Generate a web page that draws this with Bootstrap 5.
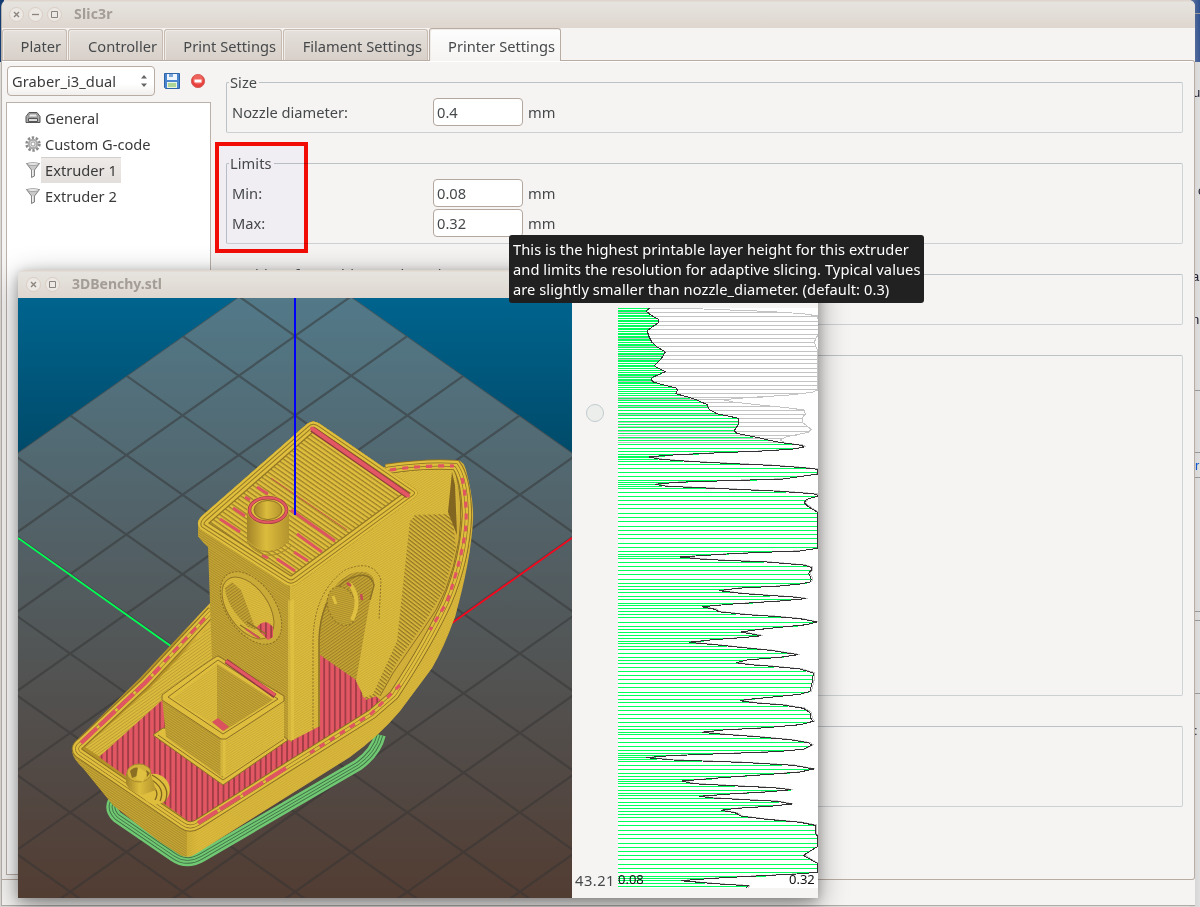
<!DOCTYPE html>
<html lang="en">
<head>
<meta charset="utf-8">
<title>Slic3r</title>
<link href="https://cdn.jsdelivr.net/npm/bootstrap@5.3.0/dist/css/bootstrap.min.css" rel="stylesheet">
<style>
body{width:1200px;height:907px;overflow:hidden;background:#dcdcdc;color:#46494b;font:14.667px/20px "Noto Sans","Open Sans",sans-serif}
.desk-l{left:0;top:0;width:4px;height:907px;background:linear-gradient(#123c72 0 62px,#dcd9d5 62px)}
.desk-r{right:0;top:0;width:10px;height:907px;background:linear-gradient(90deg,#bbb6,#ddd0),linear-gradient(#2b4f8e,#3d5a94 62px,#dedede 62px)}
.desk-r span{position:absolute;font:13px/16px "Liberation Sans",sans-serif;color:#223}
.desk-r hr{position:absolute;right:0;width:6px;margin:0;border-top:1px solid #999;opacity:1}
.win{border-radius:7px 7px 0 0}
.main-win{left:1px;top:0;width:1194px;height:906px;background:#f5f4f2;border-left:1px solid #b5b0ab;border-bottom:1px solid #b0aca8}
.titlebar{height:28px;background:linear-gradient(#dfd5cd 0 1px,#e6e4df 2px,#ded6cf);border-radius:6px 6px 0 0;color:#a49c96;font-weight:700;font-size:14px}
.wbtn{width:15px;height:15px;border-radius:50%;background:#ece8e3;border:1px solid #dacdc4;margin-right:4px;display:block;flex:none}
.wbtn svg{display:block}
.tabs{height:32px}
.tab-i{height:31px;border:1px solid #c8bbb1;border-bottom:0;border-radius:3px 3px 0 0;background:linear-gradient(#e5e0db,#d8d0c9);text-align:right;padding:6px 5px 0 0;margin-right:1px;box-shadow:inset 1px 1px 0 #efebe7;white-space:nowrap}
.tab-i.on{height:33px;background:linear-gradient(#fdfdfd,#f5f4f2);position:relative;z-index:1;margin-bottom:-1px;border-color:#b9aca2;padding-top:7px}
.pane{height:820px;border:1px solid #b9aca2;border-left:0;border-radius:0 3px 3px 0;box-shadow:inset 0 1px #fff}
.side{width:209px;padding:5px 0 0 4px}
.combo{width:148px;height:30px;border:1px solid #b9aca2;border-radius:4px;background:linear-gradient(#fff 60%,#f1efed);padding:0 6px 0 4px;margin-left:1px;color:#3a3a3a;letter-spacing:.07px}
.tree{height:773px;margin-top:6px;border:1px solid #bbb1a9;background:#fff;padding:2px 0 0 18px;color:#3a3a3a}
.tree>div{height:26px}
.tree span{height:26px;padding:2px 4px 0 3px;border:1px solid transparent}
.tree .sel{background:linear-gradient(#eeebe8,#e2dedb);border:1px solid #d4ceca;border-width:1px 0 0 0;padding:2px 4px 0 4px}
.form-side{padding:21px 0 0 15px}
.fs{position:relative;width:957px;border:1px solid #bac2c6;border-right-color:#ccd4d6;border-bottom-color:#cbd0d3;border-radius:2px;margin-bottom:30px;padding:15px 0 0 5px}
.fs>b{position:absolute;font-weight:400;left:2px;top:-11px;background:#f5f4f2;padding:0 2px 0 1px;letter-spacing:.05px}
.frow{height:28px;margin-bottom:2px}
.frow label{width:201px}
.inp{width:90px;height:28px;border:1px solid #b3a79e;border-radius:4px;background:#fff;padding:0 3px;color:#46494b;margin-right:5px;font:inherit}
.redbox{left:215px;top:142px;width:93px;height:111px;border:4px solid #fb0d05;background:#faf9ff;mix-blend-mode:multiply}
.dlg{left:18px;top:270px;width:800px;height:628px;background:#f5f4f2;box-shadow:0 8px 30px rgba(0,0,0,.38),0 3px 12px rgba(0,0,0,.25)}
.tip{left:509px;top:235px;width:415px;height:68px;border-radius:3px;background:#1d1d1dfb;color:#fff;padding:3.500px 4px;white-space:nowrap;letter-spacing:.055px}
.zcol{width:46px}
.knob{width:18px;height:18px;border:1.5px solid #c2cbcd;border-radius:50%;background:#eceeec;left:14px;top:106px}
.zval{left:3px;bottom:8px;letter-spacing:.5px}
</style>
</head>
<body class="position-relative">
<div class="desk-l position-absolute"></div>
<div class="desk-r position-absolute overflow-hidden">
<hr style="top:13px"><span style="left:3px;top:85px">us</span><span style="left:8px;top:183px">o</span><span style="left:2px;top:269px">an</span><span style="left:2px;top:312px">ni</span><span style="left:5px;top:458px;color:#15c">r</span><span style="left:4px;top:723px">:</span>
<hr style="top:390px"><hr style="top:452px"><hr style="top:477px"><hr style="top:611px"><hr style="top:620px"><hr style="top:693px">
</div>

<div class="win main-win position-absolute">
<div class="titlebar d-flex align-items-center" style="padding-left:7px">
<i class="wbtn"><svg width="13" height="13" stroke="#8c857f" stroke-width="1.4"><path d="M4 4l5 5M9 4l-5 5"/></svg></i>
<i class="wbtn"><svg width="13" height="13" stroke="#8c857f" stroke-width="1.3"><path d="M3 6.5h7"/></svg></i>
<i class="wbtn"><svg width="13" height="13" stroke="#8c857f" fill="none"><path d="M3.5 3.5h6v6h-6z"/></svg></i>
<span style="margin-left:8px;letter-spacing:.2px">Slic3r</span></div>
<div class="tabs d-flex align-items-end">
<div class="tab-i" style="width:65px">Plater</div><div class="tab-i" style="width:95px">Controller</div><div class="tab-i" style="width:118px">Print Settings</div><div class="tab-i" style="width:145px">Filament Settings</div><div class="tab-i on" style="width:132px">Printer Settings</div>
</div>
<div class="pane d-flex">
<div class="side">
<div class="d-flex align-items-center">
<div class="combo d-flex align-items-center justify-content-between"><span>Graber_i3_dual</span><svg width="8" height="14"><path d="M1 4.5l3-3.5 3 3.5zM1 9.5l3 3.5 3-3.500z" fill="#666"/></svg></div>
<svg width="16" height="16" style="margin-left:9px"><path d="M.5 .5h15v15h-14l-1-1z" fill="#4a86cf" stroke="#2c63a8"/><path d="M3 1h10v6H3z" fill="#eef5fc"/><path d="M5 1h4v3H5z" fill="#7aa5d8"/><path d="M3 9h10v6H3z" fill="#e9f3e0"/><path d="M4 11h8M4 13h8" stroke="#72b84c"/></svg>
<svg width="16" height="16" style="margin-left:10px"><circle cx="8" cy="8" r="6.6" fill="#e8403c" stroke="#d2625c"/><circle cx="8" cy="6.5" r="5" fill="#f47c72" opacity=".6"/><path d="M4.500 6.500h7v3h-7z" fill="#fff"/></svg>
</div>
<div class="tree">
<div class="d-flex align-items-center"><svg width="16" height="16"><path d="M4 2.5h8l3 4v6H1v-6z" fill="#aaa" stroke="#555"/><path d="M4.5 4h7l1 3h-9z" fill="#eee" stroke="#777" stroke-width=".7"/><path d="M3.5 8.5h9v3h-9z" fill="#ddd" stroke="#555"/></svg><span>General</span></div>
<div class="d-flex align-items-center"><svg width="16" height="16"><circle cx="8" cy="8" r="6.4" fill="none" stroke="#8b8b8b" stroke-width="2.6" stroke-dasharray="2.4 1.62"/><circle cx="8" cy="8" r="4.2" fill="#ddd" stroke="#aaa" stroke-width="2"/><circle cx="8" cy="8" r="2" fill="#fff" stroke="#888" stroke-width=".8"/></svg><span>Custom G-code</span></div>
<div class="d-flex align-items-center"><svg width="16" height="16"><path d="M1.5 1.5h13l-5 6.5v6l-3 1.5V8z" fill="#c9c9c9" stroke="#777" stroke-width=".9"/><ellipse cx="8" cy="2" rx="6" ry="1.4" fill="#eee" stroke="#888" stroke-width=".7"/><path d="M7.8 8v6" stroke="#fff"/></svg><span class="sel">Extruder 1</span></div>
<div class="d-flex align-items-center"><svg width="16" height="16"><path d="M1.5 1.5h13l-5 6.5v6l-3 1.5V8z" fill="#c9c9c9" stroke="#777" stroke-width=".9"/><ellipse cx="8" cy="2" rx="6" ry="1.4" fill="#eee" stroke="#888" stroke-width=".7"/><path d="M7.8 8v6" stroke="#fff"/></svg><span>Extruder 2</span></div>
</div>
</div>
<div class="form-side">
<div class="fs" style="height:51px"><b>Size</b><div class="frow d-flex align-items-center"><label>Nozzle diameter:</label><input class="inp" value="0.4">mm</div></div>
<div class="fs" style="height:81px"><b>Limits</b><div class="frow d-flex align-items-center"><label>Min:</label><input class="inp" value="0.08">mm</div><div class="frow d-flex align-items-center"><label>Max:</label><input class="inp" value="0.32">mm</div></div>
<div class="fs" style="height:51px"><b>Position (for multi-extruder printers)</b></div>
<div class="fs" style="height:341px"></div>
<div class="fs" style="height:81px"></div>
</div>
</div>
</div>
<div class="redbox position-absolute"></div>

<div class="win dlg position-absolute">
<div class="titlebar d-flex align-items-center" style="padding-left:8px">
<i class="wbtn"><svg width="13" height="13" stroke="#8c857f" stroke-width="1.4"><path d="M4 4l5 5M9 4l-5 5"/></svg></i>
<i class="wbtn"><svg width="13" height="13" stroke="#8c857f" fill="none"><path d="M3.5 3.5h6v6h-6z"/></svg></i>
<span style="margin-left:8px">3DBenchy.stl</span></div>
<div class="d-flex">
<svg id="view" width="554" height="600" viewBox="18 298 554 600">
<defs>
<linearGradient id="sky" x2="0" y2="1"><stop stop-color="#00648e"/><stop offset="1" stop-color="#000"/></linearGradient>
<linearGradient id="chim"><stop stop-color="#a38428"/><stop offset=".45" stop-color="#dcbc3c"/><stop offset="1" stop-color="#b4942e"/></linearGradient>
<linearGradient id="hullg" gradientUnits="userSpaceOnUse" x1="180" y1="0" x2="240" y2="0"><stop stop-color="#b39127"/><stop offset=".3" stop-color="#dab73a"/><stop offset="1" stop-color="#d2af38"/></linearGradient>
<pattern id="pL" width="3" height="2" patternUnits="userSpaceOnUse" patternTransform="rotate(33)"><rect width="3" height="2" fill="#c8a936"/><rect width="3" height=".9" fill="#a88a2a"/></pattern>
<pattern id="pR" width="3" height="2" patternUnits="userSpaceOnUse" patternTransform="rotate(-32)"><rect width="3" height="2" fill="#dfbf3e"/><rect width="3" height=".8" fill="#c8a735"/></pattern>
<pattern id="pD" width="3" height="2.6" patternUnits="userSpaceOnUse" patternTransform="rotate(-35)"><rect width="3" height="2.6" fill="#c6a634"/><rect width="3" height="1.1" fill="#9d8028"/></pattern>
<pattern id="pW" width="3" height="2.6" patternUnits="userSpaceOnUse" patternTransform="rotate(-35)"><rect width="3" height="2.6" fill="#dcbc3d"/><rect width="3" height=".9" fill="#bd9e33"/></pattern>
<pattern id="pRoof" width="4" height="3.9" patternUnits="userSpaceOnUse" patternTransform="rotate(34.8)"><rect width="4" height="4" fill="#dfbf3d"/><rect width="4" height="1.3" fill="#9a7d28"/></pattern>
<pattern id="pS" width="3" height="3.2" patternUnits="userSpaceOnUse" patternTransform="rotate(38)"><rect width="3" height="3.2" fill="#d4b43a"/><rect width="3" height="1.2" fill="#917526"/></pattern>
<pattern id="pDeck" width="5.3" height="4" patternUnits="userSpaceOnUse"><rect width="5.3" height="4" fill="#e25763"/><rect width="1.8" height="4" fill="#a03c45"/></pattern>
<clipPath id="cBed"><path d="M295 257L-150 571V898H740V571z"/></clipPath>
<clipPath id="cRoof"><path id="roofp" d="M307 424Q313 419 320 424L415 489Q420 493 415 497L297 584Q291 588 285 584L200 529Q195 523 202 516z"/></clipPath>
</defs>
<path d="M18 298h554v600H18z" fill="url(#sky)"/>
<path d="M295 257L-150 571V898H740V571z" fill="#cc997f" fill-opacity=".4"/>
<g id="grid" clip-path="url(#cBed)" stroke="#333" stroke-opacity=".5" stroke-width="2.2"></g>
<path d="M18 538L175 649" stroke="#0f5" stroke-width="1.8"/><path d="M572 538L452 623" stroke="#f8081e" stroke-width="1.8"/>
<!-- skirt loops -->
<g fill="none" stroke-linejoin="round">
<path d="M117 797Q107 807 117 817L174 856Q187 865 202 856L358 765Q376 752 380 735" stroke="#70c873" stroke-width="11.5"/>
<path d="M117 797Q107 807 117 817L174 856Q187 865 202 856L358 765Q376 752 380 735" stroke="#3f6e43" stroke-width="6.4"/>
<path d="M117 797Q107 807 117 817L174 856Q187 865 202 856L358 765Q376 752 380 735" stroke="#70c873" stroke-width="4.6"/>
<path d="M117 797Q107 807 117 817L174 856Q187 865 202 856L358 765Q376 752 380 735" stroke="#3f6e43" stroke-width=".9"/>
</g>
<!-- hull -->
<path d="M72 747L77 740 140 678 211 602 380 468 413 462 433 461 458 460Q464 462 466 470 474 500 473 520 471 560 455 617 443 650 432 668L400 711Q380 735 350 757L197 853Q188 859 180 855L160 842 113 805 83 768Q71 757 72 747z" fill="url(#hullg)"/>
<path d="M72 748L187 828 186 857 160 842 113 805 83 768Q71 757 72 748z" fill="url(#pL)"/>
<path d="M187 828V857Q190 858 197 853L350 757Q380 735 400 711L432 668 455 617 470 550 462 560 430 625 402 690 380 712 283 772z" fill="url(#pR)" opacity=".6"/>
<path d="M85 747L150 688 213 622 213 660 160 703 100 757z" fill="url(#pW)"/>
<path d="M99 757L160 702 215 670 320 655 356 680 383 702 370 718 283 770 197 821Q190 824 184 818z" fill="url(#pDeck)"/>
<path d="M385 472L455 464 458 515 418 517 400 490z" fill="url(#pR)"/>
<path d="M408 515L452 514 456 548 444 590 425 622 396 664 380 695 365 700 395 640z" fill="url(#pS)"/>
<path d="M452 472L455 485 457 535 448 512z" fill="#816520"/>
<path d="M455 470Q464 500 459 540 450 595 424 628L393 673 380 696" fill="none" stroke="#8c7024" stroke-width="1"/>
<g fill="none">
<path id="rim" d="M386 469Q425 463 456 465 466 478 467 515 465 560 447 602 430 640 394 695L372 714 283 770 198 824Q190 829 183 824L79 753Q74 748 81 743L145 683 212 611" stroke="#8b7026" stroke-width="10"/>
<use href="#rim" style="stroke:#dfbe3e"/>
<path d="M386 469Q425 463 456 465 466 478 467 515 465 560 447 602 430 640 394 695L372 714 283 770 198 824Q190 829 183 824L79 753Q74 748 81 743L145 683 212 611" stroke="#dfbe3e" stroke-width="8.400"/>
<path d="M386 469Q425 463 456 465 466 478 467 515 465 560 447 602 430 640 394 695L372 714 283 770 198 824Q190 829 183 824L79 753Q74 748 81 743L145 683 212 611" stroke="#876c24" stroke-width="3.800"/>
<path d="M386 469Q425 463 456 465 466 478 467 515 465 560 447 602 430 640 394 695L372 714 283 770 198 824Q190 829 183 824L79 753Q74 748 81 743L145 683 212 611" stroke="#dfbe3e" stroke-width="2.600"/>
<path d="M390 470Q425 465 454 466M462 478Q467 500 466 525 463 555 447 602L430 630M400 685L372 713 310 753" stroke="#df5561" stroke-width="3.200" stroke-dasharray="6 6"/>
<path d="M286 768L198 823" stroke="#df5561" stroke-width="4" stroke-dasharray="24 3"/>
<path d="M81 743L145 683L160 667" stroke="#df5561" stroke-width="4.200" stroke-dasharray="22 3"/>
<path d="M164 662L206 617" stroke="#df5561" stroke-width="3" stroke-dasharray="8 5"/>
</g>
<!-- cabin -->
<path d="M198 525L292 588V742L212 696V660L208 547Q198 540 198 525z" fill="url(#pL)"/>
<path d="M290 586L418 492 418 508Q417 514 410 520L397 641 373 694 364 698 355 682 320 657V726L291 741z" fill="url(#pR)"/>
<path d="M291 588V740" stroke="#e5c644" stroke-width="6" opacity=".6"/>
<path d="M319 727V640Q320 590 350 574 372 566 376 585L364 698 355 682 320 657z" fill="url(#pD)"/>
<path d="M320 655L356 680 364 692 350 706 320 727z" fill="url(#pDeck)"/>
<path d="M356 681L364 697 372 692 382 590 374 578z" fill="url(#pR)"/>
<path d="M319 727V640Q320 600 345 581 370 568 374 585L370 600" fill="none" stroke="#8d7125" stroke-width="1.5"/>
<path d="M313 729V640Q314 592 345 570 373 558 381 580L379 620" fill="none" stroke="#8d7125" stroke-dasharray="2 1.5"/>
<ellipse cx="342" cy="606" rx="14" ry="20" transform="rotate(-18 342 606)" fill="url(#pL)" stroke="#8f7426" stroke-dasharray="2 2"/>
<path d="M350 584Q362 600 352 620" fill="none" stroke="#e0c040" stroke-width="4"/>
<path d="M333 596l3 8" fill="none" stroke="#e0c040" stroke-width="3"/>
<path d="M347 583l4 3M361 594l1 6" stroke="#c44c55" stroke-width="2.500"/>
<ellipse cx="251" cy="608" rx="41" ry="24" transform="rotate(55 251 608)" fill="#cbab37" stroke="#8d7226" stroke-dasharray="2 1.500"/>
<ellipse cx="248" cy="608" rx="35" ry="20" transform="rotate(55 248 608)" fill="url(#pR)" stroke="#927626"/>
<path d="M225 588Q226 606 248 627L256 630 241 590 232 582z" fill="url(#pD)"/>
<path d="M256 628Q265 617 273 627V637L268 640z" fill="url(#pDeck)"/>
<path d="M240 625L260 638M247 622L266 634" stroke="#8d7226" stroke-width="1.400"/><path d="M246 629L259 638" stroke="#cf515b" stroke-width="2"/>
<!-- roof -->
<path d="M198 522V536Q203 543 210 547L290 601 410 521Q418 515 418 494L291 586z" fill="url(#pR)"/>
<path d="M198 522V536Q203 543 210 547L290 601V585z" fill="url(#pL)"/>
<g clip-path="url(#cRoof)" fill="none">
<use href="#roofp" fill="url(#pRoof)"/>
<use href="#roofp" stroke="#927625" stroke-width="21"/><use href="#roofp" stroke="#dfbf3d" stroke-width="18.500"/>
<use href="#roofp" stroke="#927625" stroke-width="13"/><use href="#roofp" stroke="#dfbf3d" stroke-width="11"/>
<use href="#roofp" stroke="#927625" stroke-width="6.400"/><use href="#roofp" stroke="#dfbf3d" stroke-width="4.600"/>
<path d="M312 429L408 495.500" stroke="#8c3b3b" stroke-width="6"/><path d="M312 428.500L408 495.500" stroke="#e25763" stroke-width="4" stroke-linecap="round"/>
<path d="M257 487L268 494M291 510L335 541M297 534L322 552M294 552L308 561M277 559L295 571M220 519L240 532M233 508L245 516M245 497L250 500M262 555L268 558" stroke="#dc5560" stroke-width="3"/>
<path d="M271 478L347 530" stroke="#c4554a"/>
</g>
<!-- chimney -->
<path d="M247 510V540Q268 562 289 540V510z" fill="url(#chim)"/>
<path d="M247 541Q268 563 289 541M249 545Q268 565 291 546" fill="none" stroke="#a88a2b"/>
<ellipse cx="268" cy="510" rx="21" ry="14.500" fill="#d8b83a"/>
<ellipse cx="268" cy="510" rx="18.500" ry="12.300" fill="#dfbf3d" stroke="#9e3f3f" stroke-width="3.600"/>
<ellipse cx="268" cy="510" rx="18.500" ry="12.300" fill="none" stroke="#e25763" stroke-width="2.200"/>
<ellipse cx="268" cy="510" rx="14" ry="9.500" fill="url(#chim)" stroke="#8c7024"/>
<path d="M294 298h2v217h-2z" fill="#0000fa"/>
<!-- box -->
<path d="M153 735L163 728 283 736 288 740 223 785z" fill="#dfbe3e" stroke="#8b7026"/>
<path d="M158 735L223 780 284 739" fill="none" stroke="#8b7026"/>
<path d="M162 697L223 740V778L166 737z" fill="url(#pL)"/>
<path d="M223 740L284 700V738L223 778z" fill="url(#pR)"/>
<path d="M223 738v38" stroke="#e5c644" stroke-width="5" opacity=".6"/>
<path d="M218 656Q215 656 162 695V700L221 739H226L284 701V696z" fill="#dfbe3e" stroke="#8b7026"/>
<path d="M218 660L168 697 223 734 278 699z" fill="none" stroke="#8b7026"/>
<path d="M217 664L173 698 224 731 217 718z" fill="url(#pR)"/><path d="M217 664L273 700 224 731 217 720z" fill="url(#pL)"/>
<path d="M212 722L218 718 229 727 223 731z" fill="#d9525e"/>
<path d="M226 661L275 696" stroke="#8f3b3d" stroke-width="5"/><path d="M226 661L275 695" stroke="#e25763" stroke-width="3.200"/>
<!-- bow fitting -->
<g fill="none"><ellipse cx="155" cy="789" rx="13" ry="14" fill="#dfbe3e" stroke="#dfbe3e" stroke-width="3" transform="rotate(-30 155 789)"/>
<path d="M152 775Q172 786 165 802M150 779Q166 788 160 801M148 783Q161 790 155 800" stroke="#80651f" stroke-width="1.300"/></g>
<path d="M126 773V784Q130 792 142 795L156 790 150 772z" fill="url(#chim)"/>
<ellipse cx="139" cy="773" rx="12" ry="9" fill="#d2b239" stroke="#a88a2c"/><path d="M130 771q4-5 9-3l-2 8-5 2zM146 770l4 3-3 4z" fill="#8a6e23"/><path d="M138 767l9 6-4 9-7-3z" fill="#e0c041"/>
</svg>
<div class="zcol position-relative"><i class="knob position-absolute"></i><span class="zval position-absolute">43.21</span></div>
<svg id="prof" width="200" height="580" viewBox="618 308 200 580" style="margin-top:10px" shape-rendering="crispEdges" fill="none"><path d="M618 308h200v580H618z" fill="#fff"/></svg>
</div>
</div>

<div class="tip position-absolute">This is the highest printable layer height for this extruder<br>and limits the resolution for adaptive slicing. Typical values<br>are slightly smaller than nozzle_diameter. (default: 0.3)</div>

<script src="https://cdn.jsdelivr.net/npm/bootstrap@5.3.0/dist/js/bootstrap.bundle.min.js"></script>
<script>
const NS='http://www.w3.org/2000/svg';
function add(parent,tag,attrs,text){const e=document.createElementNS(NS,tag);for(const k in attrs)e.setAttribute(k,attrs[k]);if(text)e.textContent=text;parent.appendChild(e);return e}
// bed grid: two families of parallel lines
let g='';
for(let k=-1;k<16;k++){const y=336+k*79.4;g+=`M-105 ${y-282.5}L695 ${y+282.5}M-105 ${y+282.5}L695 ${y-282.5}`}
add(document.getElementById('grid'),'path',{d:g});
// layer height curves, in thirds of a pixel from an origin
const seg=(ox,oy,s)=>s.split(' ').map(p=>{const[a,b]=p.split(',');return[ox+a/3,oy+b/3]});
const top1=seg(600,300,'150,24 138,33 152,45 175,58 175,68 158,80 142,92 146,108 155,126 170,140 196,156 184,176 163,197 172,203 196,215 158,232 153,238 160,246 195,256 228,264 232,270 227,281 260,290 290,300 322,314 327,328 350,341 416,355 414,375 403,392 410,400 470,412 500,419 545,428');
const low=seg(600,300,'605,436 612,441 575,448 470,454 360,458 200,466 148,471 180,478 280,485 400,491 510,496 610,503 652,508 654,522 606,529 550,537 380,542 230,547 165,553 200,559 340,565 520,573 600,578 650,583 652,589 620,598').concat(
seg(600,500,'612,8 625,20 652,36 652,72 652,112 653,145 600,153 490,157 380,162 240,171 300,177 370,181 500,186 610,195 634,202 634,210 626,220 634,238 630,246 600,252 540,258 410,265 358,272 420,280 500,286 580,291 618,296 540,303 400,312 305,320 345,328 355,335 440,344 520,349 600,356 650,366 620,374 540,382 470,389 423,396 455,402 484,407 440,412 340,419 266,427 345,434 440,444 510,451 595,464 540,472 440,480 408,488 450,494 515,499 600,507 640,519 638,540 630,574 600,583 520,591 436,599'),
seg(570,700,'510,2 560,9 640,15 700,25 720,38 722,55 730,64 690,74 590,83 460,90 395,97 460,103 560,110 660,119 715,128 725,135 700,148 620,155 430,162 300,167 228,173 310,180 510,187 670,196 731,207 690,216 600,223 470,232 335,243 370,251 520,259 610,263 663,269 600,275 480,282 388,289 430,294 540,300 620,304 665,312 600,319 500,325 452,331 495,338 515,349 590,358 690,367 735,376 735,398 742,408 742,440 700,466 742,490 742,517 680,522 540,529 430,535 332,542 400,548 460,553 535,557 530,563'));
const top0=seg(600,300,'150,24 200,26 310,27 390,30 470,33 530,36 610,41 653,48 658,100 648,113 643,128 650,145 653,150 653,270 636,277 560,286 470,291 400,296 372,300 400,306 470,314 560,323 612,330 616,342 606,355 608,368 634,388 625,397 560,410 540,420 560,430');
const cur=top1.concat(low),old=top0.concat(low.map(p=>[Math.min(p[0]+1.5,817.7),p[1]-.3]));
const at=(c,y)=>{for(let i=1;i<c.length;i++)if(c[i][1]>=y&&c[i-1][1]<=y){const t=(y-c[i-1][1])/((c[i][1]-c[i-1][1])||1);return c[i-1][0]+t*(c[i][0]-c[i-1][0])}return c[c.length-1][0]};
const layers=(c,bottom)=>{let d='',y=bottom;while(y>308){const x=at(c,y);d+=`M618 ${Math.round(y)+.5}H${x.toFixed(1)}`;y-=13.42*(.08+.24*(Math.min(x,818)-618)/200)}return d};
const line=c=>'M'+c.map(p=>p[0].toFixed(1)+' '+p[1].toFixed(1)).join('L');
const P=document.getElementById('prof');
add(P,'path',{d:layers(old,442),stroke:'#c4c4c4'});
add(P,'path',{d:line(old),stroke:'#c4c4c4'});
add(P,'path',{d:layers(cur,886),stroke:'#00ff5a'});
add(P,'path',{d:line(cur),stroke:'#333'});
const f={'font-size':13,fill:'#111','font-family':'Noto Sans'};
add(P,'text',{x:618,y:884,...f},'0.08');add(P,'text',{x:789,y:884,...f},'0.32');
</script>
</body>
</html>
